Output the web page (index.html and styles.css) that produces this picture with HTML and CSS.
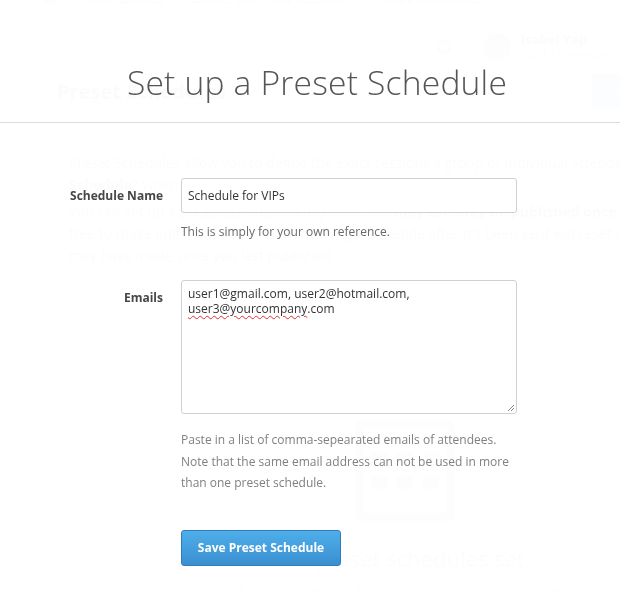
FILE: index.html
```html
<!DOCTYPE html>
<html>
<head>
<meta charset="utf-8">
<link rel="stylesheet" href="styles.css">
</head>
<body>
<div class="app">
  <nav class="topnav">
    <span class="logo"></span>
    <span class="nav-item">Your Guides</span>
    <span class="nav-item">Guide: Bali First Session</span>
    <span class="nav-item">Preset Schedules</span>
  </nav>
  <div class="userbar">
    <span class="search-ico"></span>
    <span class="avatar"></span>
    <div class="user-text">
      <div class="user-name">Isabel Yap</div>
      <div class="user-role">Staff • Premium • Bali</div>
    </div>
  </div>
  <div class="page-head">
    <h2 class="page-title">Preset Schedules</h2>
    <span class="page-btn">Create</span>
  </div>
  <div class="page-copy">
    <p>Preset Schedules allow you to define the exact sessions a group or individual attendee should see in their "My</p>
    <p><b>Schedule"</b> when logging in to the guide.</p>
    <p>You can set up a preset schedule at any time, but <b>they can only be published once your guide its live.</b> Feel</p>
    <p>free to make edits, but note that publishing a schedule after it's been sent will reset any adjustments attendees</p>
    <p>may have made since you last published.</p>
  </div>
  <div class="empty">
    <div class="cal-ico">
      <span></span><span></span><span></span><span></span><span></span><span></span>
    </div>
    <div class="empty-text">No preset schedules set.</div>
    <div class="empty-sub">Create a preset schedule to get started with your attendees</div>
  </div>
</div>

<div class="modal">
  <div class="modal-header">
    <h1 class="modal-title">Set up a Preset Schedule</h1>
  </div>
  <form class="modal-form">
    <label class="field-label">Schedule Name</label>
    <div class="field">
      <input class="text-input" type="text" value="Schedule for VIPs">
      <p class="help">This is simply for your own reference.</p>
    </div>
    <label class="field-label label-emails">Emails</label>
    <div class="field">
      <div class="textarea"><span>user1@gmail.com, user2@hotmail.com,</span><br><span class="misspelled">user3@yourcompany</span>.com<svg class="grip" width="9" height="9" viewBox="0 0 9 9"><path d="M8 2 L2 8 M8 5 L5 8" stroke="#888" stroke-width="1" fill="none"/></svg></div>
      <p class="help help-multi">Paste in a list of comma-sepearated emails of attendees. Note that the same email address can not be used in more than one preset schedule.</p>
      <button class="save-btn" type="button">Save Preset Schedule</button>
    </div>
  </form>
</div>
</body>
</html>
```

FILE: styles.css
```css
html, body {
  margin: 0;
  padding: 0;
}
body {
  font-family: "Open Sans", "DejaVu Sans", sans-serif;
  color: #333;
  background: #fff;
  overflow: hidden;
  width: 620px;
  height: 597px;
}

/* background application */
.app {
  position: relative;
  width: 620px;
  height: 597px;
  overflow: hidden;
}
.topnav {
  display: flex;
  align-items: center;
  gap: 26px;
  height: 20px;
  margin-top: -13px;
  padding-left: 42px;
  font-size: 14px;
  color: #2d3e50;
  white-space: nowrap;
}
.logo {
  flex-shrink: 0;
  width: 16px;
  height: 16px;
  border-radius: 50%;
  background: #4a90d9;
}
.userbar {
  display: flex;
  align-items: center;
  gap: 10px;
  margin: 25px 0 0 437px;
  white-space: nowrap;
}
.search-ico {
  flex-shrink: 0;
  width: 10px;
  height: 10px;
  border: 2px solid #666;
  border-radius: 50%;
  margin-right: 22px;
}
.avatar {
  flex-shrink: 0;
  width: 28px;
  height: 28px;
  border-radius: 50%;
  background: #999;
}
.user-name {
  font-size: 13px;
  font-weight: 700;
  color: #2d3e50;
  line-height: 15px;
}
.user-role {
  font-size: 12px;
  color: #888;
  line-height: 15px;
}
.page-head {
  display: flex;
  align-items: center;
  justify-content: space-between;
  margin-top: 11px;
  padding-left: 57px;
  height: 36px;
}
.page-title {
  margin: 0;
  font-size: 20px;
  font-weight: 700;
  color: #2d3e50;
}
.page-btn {
  flex-shrink: 0;
  width: 40px;
  height: 35px;
  margin-right: -20px;
  background: #3b8fd0;
  border-radius: 3px;
  color: #fff;
  font-size: 13px;
  line-height: 35px;
  padding-left: 8px;
  overflow: hidden;
}
.page-copy {
  margin-top: 43px;
  padding-left: 69px;
  white-space: nowrap;
  font-size: 14px;
  color: #555;
}
.page-copy p {
  margin: 0;
  line-height: 22px;
}
.page-copy p:nth-child(3) {
  margin-top: 5px;
}
.empty {
  display: flex;
  flex-direction: column;
  align-items: center;
  margin-top: 152px;
  padding-left: 190px;
}
.cal-ico {
  width: 84px;
  height: 86px;
  border: 8px solid #888;
  border-radius: 8px;
  display: grid;
  grid-template-columns: repeat(3, 16px);
  gap: 10px;
  justify-content: center;
  align-content: center;
}
.cal-ico span {
  height: 14px;
  background: #888;
}
.empty-text {
  margin-top: 22px;
  font-size: 22px;
  line-height: 30px;
  color: #777;
}
.empty-sub {
  margin-top: 8px;
  font-size: 12px;
  color: #999;
  white-space: nowrap;
}

/* modal overlay */
.modal {
  position: fixed;
  inset: 0;
  background: rgba(255, 255, 255, 0.98);
}
.modal-header {
  height: 122px;
  border-bottom: 1px solid #dcdcdc;
  display: flex;
  justify-content: center;
  padding-left: 14px;
}
.modal-title {
  margin: 62px 0 0 0;
  font-size: 33.6px;
  font-weight: 300;
  line-height: 40px;
  color: #555;
  letter-spacing: 0.2px;
}
.modal-form {
  display: grid;
  grid-template-columns: 163px 336px;
  column-gap: 18px;
  padding-top: 55px;
}
.field-label {
  text-align: right;
  font-size: 12px;
  font-weight: 700;
  color: #474747;
  padding-top: 10px;
  line-height: 16px;
}
.label-emails {
  padding-top: 10px;
}
.field {
  display: flex;
  flex-direction: column;
  align-items: flex-start;
}
.text-input {
  box-sizing: border-box;
  width: 336px;
  height: 35px;
  margin: 0;
  padding: 0 6px;
  border: 1px solid #cfcfd4;
  border-radius: 3px;
  background: #fff;
  font-family: "Open Sans", sans-serif;
  font-size: 12px;
  color: #333;
  outline: none;
}
.help {
  margin: 9px 0 38px 0;
  font-family: "Open Sans", sans-serif;
  font-size: 12px;
  line-height: 20px;
  color: #6a6a6a;
}
.help-multi {
  margin: 15px 0 0 0;
  line-height: 21.5px;
  color: #808080;
  width: 330px;
}
.textarea {
  position: relative;
  box-sizing: border-box;
  width: 336px;
  height: 134px;
  border: 1px solid #cfcfd4;
  border-radius: 3px;
  background: #fff;
  padding: 5px 6px;
  font-size: 12px;
  line-height: 15px;
  color: #333;
}
.misspelled {
  text-decoration: underline wavy #e03030;
  text-decoration-thickness: 1px;
  text-underline-offset: 2px;
}
.grip {
  position: absolute;
  right: 1px;
  bottom: 1px;
}
.save-btn {
  margin-top: 36px;
  box-sizing: border-box;
  width: 160px;
  height: 36px;
  border: 1px solid #2f7dbd;
  border-radius: 3px;
  background: linear-gradient(#4eaeea, #3a8fd0);
  color: #fff;
  font-family: "Open Sans", sans-serif;
  font-size: 12px;
  font-weight: 700;
  padding: 0;
  cursor: pointer;
}
```
